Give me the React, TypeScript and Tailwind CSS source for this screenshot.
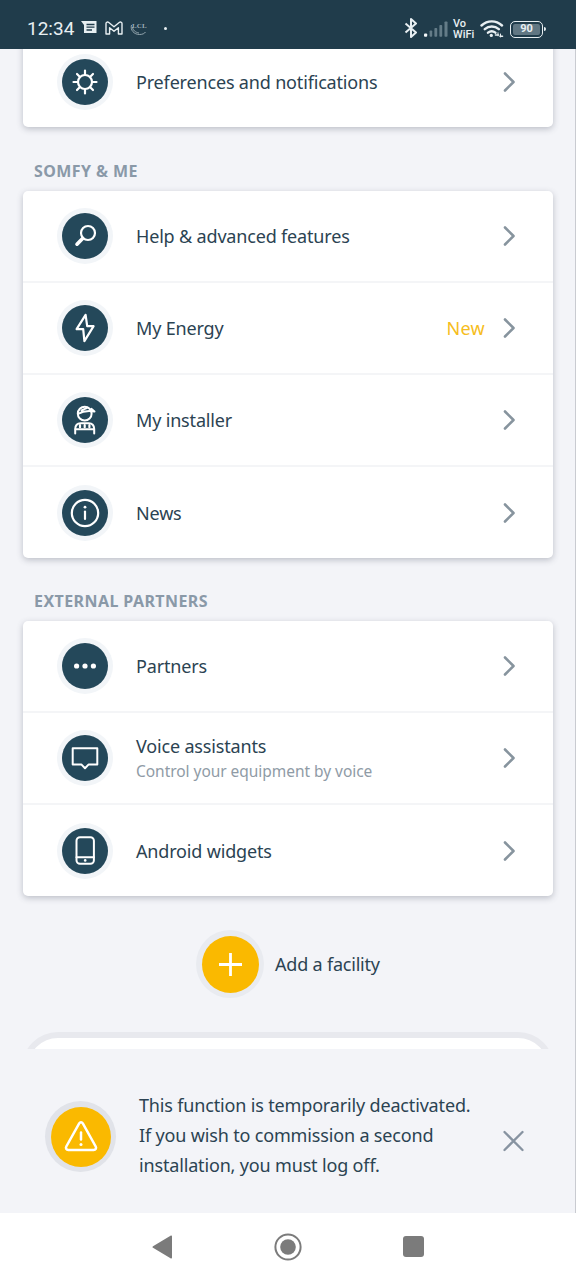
import type { ReactNode } from "react";

const icons: Record<string, ReactNode> = {
  preferences: (
    <g strokeWidth="2.2">
      <circle cx="23" cy="23" r="7" />
      <path d="M23 16v-4.500M23 30v4.500M16 23h-4.500M30 23h4.500M18 18l-3-3M28 18l3-3M18 28l-3 3M28 28l3 3" />
    </g>
  ),
  help: (
    <g>
      <circle cx="26" cy="20" r="7" strokeWidth="2.2" />
      <path d="M20.600 25.400l-5.600 5.800" strokeWidth="3.600" />
    </g>
  ),
  energy: <path d="M23.600 9.800L14.600 24.200h6.600L22.400 36.200L31.600 21.200h-6.400z" strokeWidth="2.2" />,
  installer: (
    <g strokeWidth="2">
      <circle cx="22.700" cy="16.700" r="6.900" />
      <path d="M16 16.800c5-2.800 10.500-3.400 16.500-2.300l-3.200-2.700M19.500 13.400l5.200-2.200" />
      <path d="M13.200 36.500v-4.500c.2-3.800 2-5.700 5.300-5.700h8.400c3.300 0 5.100 1.900 5.300 5.700v4.500" />
      <path d="M13.600 32.200h18.200" />
      <path d="M18 28.200v2M22.700 28.200v2M27.400 28.200v2" strokeWidth="2.200" />
    </g>
  ),
  news: (
    <g>
      <circle cx="23" cy="23" r="13.2" strokeWidth="2.2" />
      <path d="M23 21.500v7.500" strokeWidth="2.2" />
      <circle cx="23" cy="17.200" r="1.400" fill="currentColor" stroke="none" />
    </g>
  ),
  partners: (
    <g fill="currentColor" stroke="none">
      <circle cx="14.600" cy="23" r="2.600" />
      <circle cx="23" cy="23" r="2.600" />
      <circle cx="31.400" cy="23" r="2.600" />
    </g>
  ),
  voice: <path d="M10.700 13.200h24.600v16.200h-8.600L23 33.200l-3.700-3.800h-8.600z" strokeWidth="2" />,
  widgets: (
    <g strokeWidth="2">
      <rect x="14.500" y="9.200" width="17.400" height="26.600" rx="3.500" />
      <path d="M14.500 29.300h17.400" />
      <circle cx="23.200" cy="32.400" r="1.300" fill="currentColor" stroke="none" />
    </g>
  ),
};

type RowProps = {
  icon: string;
  label: string;
  hint?: string;
  badge?: string;
};

const somfyRows: RowProps[] = [
  { icon: "help", label: "Help & advanced features" },
  { icon: "energy", label: "My Energy", badge: "New" },
  { icon: "installer", label: "My installer" },
  { icon: "news", label: "News" },
];

const partnerRows: RowProps[] = [
  { icon: "partners", label: "Partners" },
  { icon: "voice", label: "Voice assistants", hint: "Control your equipment by voice" },
  { icon: "widgets", label: "Android widgets" },
];

function Row({ icon, label, hint, badge }: RowProps) {
  return (
    <li className="flex h-[92px] items-center border-b-2 border-[#f4f5f7] pr-[36px] pl-[34px] last:h-[91px] last:border-b-0">
      <div className="flex size-14 shrink-0 items-center justify-center rounded-full bg-[#f2f5f8]">
        <svg viewBox="0 0 46 46" className="size-[46px] rounded-full bg-[#24485a] text-white" fill="none" stroke="currentColor" strokeLinecap="round" strokeLinejoin="round">
          {icons[icon]}
        </svg>
      </div>
      <div className="ml-[23px] flex-1 whitespace-nowrap">
        <div className="text-lg leading-[26px] tracking-[-0.17px]">{label}</div>
        {hint && <div className="text-[15.5px] leading-[24px] tracking-[-0.04px] text-[#8f9ba6]">{hint}</div>}
      </div>
      {badge && <span className="mr-[16px] text-lg tracking-[0.3px] text-[#f6bd20]">{badge}</span>}
      <svg viewBox="0 0 16 22" className="h-[22px] w-4 text-[#87949e]" fill="none" stroke="currentColor" strokeWidth="2.6" strokeLinecap="round" strokeLinejoin="round">
        <path d="M4 2.500l8.500 8.500-8.500 8.500" />
      </svg>
    </li>
  );
}

function Card({ rows }: { rows: RowProps[] }) {
  return (
    <ul className="mr-[22px] ml-[23px] shrink-0 rounded-[5px] bg-white shadow-[0_2px_6px_rgba(60,65,85,0.3)]">
      {rows.map((row) => (
        <Row key={row.label} {...row} />
      ))}
    </ul>
  );
}

function SectionTitle({ children }: { children: ReactNode }) {
  return (
    <h2 className="flex h-[63px] shrink-0 items-center pt-[23px] pl-[34px] text-base font-bold tracking-[0.42px] text-[#8a99a8] first-of-type:h-16">
      {children}
    </h2>
  );
}

function StatusBar() {
  return (
    <header className="relative z-10 flex h-[49px] shrink-0 items-center bg-[#203c4b] pt-[9px] pr-[30px] pl-[27px] text-[#e8eff2]">
      <span className="w-[53px] font-[Roboto] text-[19px] leading-6">12:34</span>
      <svg viewBox="0 0 18 16" className="ml-px h-4 w-[18px] -translate-y-px">
        <path d="M0 1h15.500v12H3V5z" fill="currentColor" />
        <path d="M5.500 4.500h8M5.500 7.200h8M5.500 10h5.500" stroke="#203c4b" strokeWidth="1.3" />
      </svg>
      <svg viewBox="0 0 18 14" className="ml-[6px] h-[14px] w-[18px] -translate-y-px" fill="none" stroke="currentColor" strokeWidth="1.4" strokeLinejoin="round">
        <path d="M1 13V2.500C1 .8 2.800.7 3.800 1.500L9 5.700l5.200-4.200C15.200.7 17 .8 17 2.500V13h-3.600V6.700L9 10.200 4.600 6.700V13z" />
      </svg>
      <div className="relative ml-[7px] h-4 w-[20px] text-[#9fb0b8]">
        <svg viewBox="0 0 20 16" className="size-full" fill="none" stroke="currentColor" strokeWidth=".9">
          <path d="M1.500 4c-1.500 5 2.500 9.500 8 9.500 3 0 5-1 6-2.500M2.500 6c0 3 3 5.500 6.500 6" />
        </svg>
        <span className="absolute top-[2px] left-[2px] font-['Liberation_Serif'] text-[7px] leading-[7px] font-bold tracking-wide">LCL</span>
      </div>
      <span className="ml-[14px] size-[3px] -translate-y-px rounded-full bg-current" />

      <div className="ml-auto flex items-center">
        <svg viewBox="0 0 14 20" className="h-5 w-[14px] -translate-y-px" fill="none" stroke="currentColor" strokeWidth="2" strokeLinejoin="round">
          <path d="M1.500 5.500l10.500 9-5 4.500V1l5 4.500-10.500 9" />
        </svg>
        <svg viewBox="0 0 25 16" className="ml-[6px] h-4 w-[25px]" fill="#647c88">
          <rect x="0" y="12.500" width="3.200" height="3.200" rx="1" fill="#f4f8fa" />
          <rect x="5.600" y="9.500" width="2.600" height="6.300" rx=".8" />
          <rect x="10.400" y="7" width="2.800" height="8.800" rx=".8" />
          <rect x="15.400" y="4" width="2.800" height="11.800" rx=".8" />
          <rect x="20.500" y=".5" width="3" height="15.300" rx=".8" />
        </svg>
        <div className="ml-[4px] flex w-[22px] flex-col font-[Roboto] text-[11px] font-medium">
          <span className="leading-[11px]">Vo</span>
          <span className="leading-[11px]">WiFi</span>
        </div>
        <svg viewBox="0 0 24 18" className="ml-[5px] h-[18px] w-6" fill="none" stroke="currentColor" strokeWidth="2.4" strokeLinecap="round">
          <path d="M1.500 5.500c6-5.500 14.500-5.500 20.500 0M4.800 9.200c4-3.600 10-3.600 14 0M8 12.700c2.400-2 5-2 7.400 0" />
          <circle cx="11.300" cy="15.400" r="1.600" fill="currentColor" stroke="none" />
          <path d="M15.500 15h3M20 16.300h2.500" strokeWidth="1.6" />
          <path d="M18 12.800v3M20.500 14v3" strokeWidth="1" />
        </svg>
        <div className="ml-[6px] flex h-[17px] w-[33px] items-center justify-center rounded-[5px] border-[1.5px] border-current p-[2px]">
          <span className="flex h-[11px] w-full items-center justify-center rounded-[2px] bg-[#617783] font-[Roboto] text-[11px] font-bold">90</span>
        </div>
        <span className="ml-px h-1 w-[2px] rounded-r bg-current" />
      </div>
    </header>
  );
}

export default function App() {
  return (
    <div className="flex h-[1280px] w-[576px] flex-col overflow-hidden bg-[#f3f4f8] font-['Noto_Sans',sans-serif] text-[#2b4352]">
      <StatusBar />

      <main className="flex h-[1000px] shrink-0 flex-col overflow-hidden border-r border-[#c9cbd1]">
        <div className="-mt-[13px] shrink-0">
          <Card rows={[{ icon: "preferences", label: "Preferences and notifications" }]} />
        </div>
        <SectionTitle>SOMFY &amp; ME</SectionTitle>
        <Card rows={somfyRows} />
        <SectionTitle>EXTERNAL PARTNERS</SectionTitle>
        <Card rows={partnerRows} />

        <button className="mt-[34px] ml-[196px] flex shrink-0 items-center text-left">
          <span className="flex size-[68px] items-center justify-center rounded-full bg-[#e9ebf0]">
            <svg viewBox="0 0 57 57" className="size-[57px] rounded-full bg-[#fab900] text-white" stroke="currentColor" strokeWidth="2.8">
              <path d="M17 28.500h23M28.500 17v23" />
            </svg>
          </span>
          <span className="ml-[11px] text-lg tracking-[-0.2px]">Add a facility</span>
        </button>

        <div className="mt-[34px] mr-[21px] ml-[22px] h-[100px] shrink-0 rounded-[36px] border-[6px] border-[#e8e9ee] bg-white" />
      </main>

      <section className="flex h-[164px] shrink-0 items-center border-r border-[#c9cbd1] pl-[45px]">
        <div className="mt-[11px] flex size-[71px] items-center justify-center rounded-full bg-[#e1e3e9]">
          <svg viewBox="0 0 60 60" className="size-[60px] rounded-full bg-[#fab900] text-white" fill="none" stroke="currentColor" strokeWidth="2.5" strokeLinecap="round" strokeLinejoin="round">
            <path d="M28.200 16.300L15.300 39.500c-.9 1.700 0 3.400 2 3.400h25.400c2 0 2.900-1.700 2-3.400L31.800 16.300c-.9-1.500-2.700-1.500-3.600 0z" />
            <path d="M30 25.500v7" />
            <circle cx="30" cy="37.600" r="1.500" fill="currentColor" stroke="none" />
          </svg>
        </div>
        <p className="mt-[7px] ml-[23px] w-[363px] text-lg leading-[30px] tracking-[-0.16px] whitespace-nowrap">
          This function is temporarily deactivated.
          <br />
          If you wish to commission a second
          <br />
          installation, you must log off.
        </p>
        <svg viewBox="0 0 24 24" className="mt-[20px] size-6 text-[#8793a1]" stroke="currentColor" strokeWidth="2.3" strokeLinecap="round">
          <path d="M2.500 3l18 18M20.500 3L2.500 21" />
        </svg>
      </section>

      <nav className="flex h-[67px] shrink-0 items-center bg-white pl-[152px] text-[#7b7b7b]">
        <svg viewBox="0 0 21 24" className="h-6 w-[21px]" fill="currentColor">
          <path d="M1 11.200L18.500.8c.8-.5 1.500 0 1.500.8v20.800c0 .8-.7 1.300-1.500.8L1 12.800c-.7-.5-.7-1.100 0-1.600z" />
        </svg>
        <svg viewBox="0 0 28 28" className="ml-[101px] size-7" fill="currentColor">
          <circle cx="14" cy="14" r="12.600" fill="none" stroke="currentColor" strokeWidth="2" />
          <circle cx="14" cy="14" r="7.800" />
        </svg>
        <span className="ml-[101px] size-[21px] rounded-[3px] bg-current" />
      </nav>
    </div>
  );
}
